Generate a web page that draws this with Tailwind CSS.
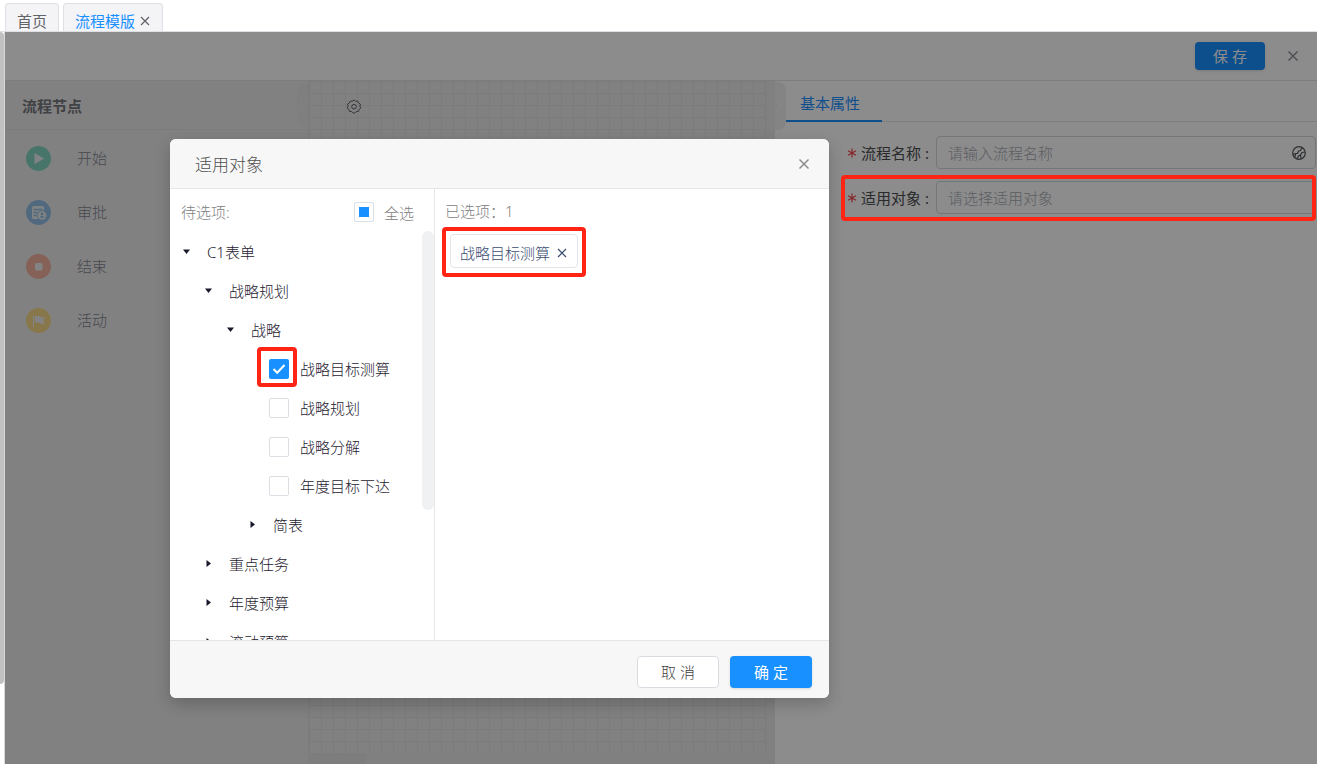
<!DOCTYPE html>
<html lang="zh-CN">
<head>
<meta charset="utf-8">
<meta name="viewport" content="width=device-width, initial-scale=1">
<title>流程模版</title>
<script src="https://cdn.jsdelivr.net/npm/@tailwindcss/browser@4"></script>
</head>
<body class="flex h-screen flex-col overflow-hidden bg-white font-['Noto_Sans','Noto_Sans_CJK_SC',sans-serif] text-[15px] leading-5 font-light text-[#1e2130]">

<!-- Page tabs -->
<nav class="flex h-8 shrink-0 items-end gap-1 border-b border-[#dfe0e6] pl-[5px] font-normal">
  <a href="#" class="flex h-7 items-center rounded-t border border-b-0 border-[#dfe0e6] bg-[#f4f4f7] px-[11px] pt-1.5 text-[#606266]">首页</a>
  <div class="flex h-7 items-center gap-1 rounded-t border border-b-0 border-[#dfe0e6] bg-[#f4f4f7] px-[11px] pt-1.5">
    <a href="#" class="text-[#1890ff]">流程模版</a>
    <button type="button" aria-label="关闭标签" class="w-3 text-[#606266]">
      <svg class="h-3 w-3" viewBox="0 0 12 12" fill="none" stroke="currentColor" stroke-width="1.2"><path d="M2 2l8 8M10 2l-8 8"/></svg>
    </button>
  </div>
</nav>

<div class="flex min-h-0 flex-1">
  <div class="w-[5px] shrink-0 border-r border-[#d8d8d8] bg-white pb-20">
    <div class="h-full rounded-r bg-[#c1c1c1]"></div>
  </div>

  <div class="relative flex min-w-0 flex-1 flex-col">
    <header class="flex h-[49px] shrink-0 items-center justify-end gap-5 border-b border-[#e4e4e4] pr-4">
      <button type="button" class="h-7 w-[70px] rounded bg-[#1890ff] font-normal text-white shadow">保 存</button>
      <button type="button" aria-label="关闭" class="text-[#909399]">
        <svg class="h-4 w-4" viewBox="0 0 16 16" fill="none" stroke="currentColor" stroke-width="1.5"><path d="M3.500 3.500l9 9M12.500 3.500l-9 9"/></svg>
      </button>
    </header>

    <div class="flex min-h-0 flex-1">
      <!-- Node palette -->
      <aside class="w-[304px] shrink-0 border-r border-[#e4e4e6] bg-[#edeced]">
        <div class="flex h-[49px] items-center justify-between border-b border-[#e2e2e4] pl-[17px]">
          <h2 class="pt-0.5 font-bold text-[#76787e]">流程节点</h2>
          <button type="button" aria-label="收起" class="flex h-11 w-[11px] items-center rounded-l-lg bg-[#e7e7e9] text-[#efeff1]">
            <svg class="h-4 w-2" viewBox="0 0 8 16" fill="none" stroke="currentColor"><path d="M6 2L2 8l4 6"/></svg>
          </button>
        </div>
        <ul class="px-[21px] pt-4 text-[#82858e]">
          <li class="flex h-[54px] items-start gap-[26px]">
            <svg class="h-[25px] w-[25px]" viewBox="0 0 25 25"><circle cx="12.500" cy="12.500" r="12.500" fill="#83d6c1"/><path d="M8.500 7v11.200l9.600-5.600z" fill="#e9eeee"/></svg>
            <span class="pt-0.5">开始</span>
          </li>
          <li class="flex h-[54px] items-start gap-[26px]">
            <svg class="h-[25px] w-[25px]" viewBox="0 0 25 25"><circle cx="12.500" cy="12.500" r="12.500" fill="#94c0e8"/><rect x="6" y="6" width="12" height="13" rx="1.500" fill="#e9eeee"/><path d="M7.500 9.500h9M7.500 12.500h4M7.500 15.500h3" stroke="#94c0e8" stroke-width="1.300"/><circle cx="16" cy="15.500" r="4.700" fill="#e9eeee" stroke="#94c0e8"/><circle cx="16" cy="14" r="1.300" fill="#94c0e8"/><path d="M13.700 17.700c.4-2.700 4.200-2.700 4.600 0z" fill="#94c0e8"/></svg>
            <span class="pt-0.5">审批</span>
          </li>
          <li class="flex h-[54px] items-start gap-[26px]">
            <svg class="h-[25px] w-[25px]" viewBox="0 0 25 25"><circle cx="12.500" cy="12.500" r="12.500" fill="#f2b19f"/><rect x="9" y="9" width="7.500" height="7.500" rx="1.500" fill="#eeeeee"/></svg>
            <span class="pt-0.5">结束</span>
          </li>
          <li class="flex h-[54px] items-start gap-[26px]">
            <svg class="h-[25px] w-[25px]" viewBox="0 0 25 25"><circle cx="12.500" cy="12.500" r="12.500" fill="#f6d987"/><path d="M7.500 7v12" stroke="#eee" stroke-width="1.200"/><path d="M9 8h5l1 1.300h4l-2 3.200 2 3.300h-5l-1-1.400H9z" fill="#eee"/></svg>
            <span class="pt-0.5">活动</span>
          </li>
        </ul>
      </aside>

      <!-- Canvas -->
      <main class="flex min-w-0 flex-1 flex-col bg-[#eaeaea]">
        <div class="mr-[9px] flex-1 bg-[linear-gradient(to_right,#e1e1e4_1px,transparent_1px),linear-gradient(to_bottom,#e1e1e4_1px,transparent_1px)] bg-[size:12px_12px] bg-[#ececec] pt-[18px] pl-[37px]">
          <button type="button" aria-label="设置" class="text-[#606266]">
            <svg class="h-4 w-4" viewBox="0 0 16 16" fill="none" stroke="currentColor"><path d="M8 1l1.700 1.200 2.100-.1.800 1.900 1.800 1.100-.5 2.100.8 1.900-1.600 1.300-.6 2-2.100.2L8.800 14H7.200l-1.600-1.400-2.100-.2-.6-2-1.600-1.300.8-1.900-.5-2.100L3.400 4l.8-1.900 2.100.1z" stroke-linejoin="round"/><circle cx="8" cy="7.700" r="2.300"/></svg>
          </button>
        </div>
        <div class="h-[11px]"><div class="h-full w-[57px] rounded-t bg-[#e4e4e6]"></div></div>
      </main>

      <!-- Properties -->
      <section class="flex w-[542px] shrink-0 bg-white">
        <button type="button" aria-label="收起" class="mt-px flex h-12 w-[11px] shrink-0 items-center rounded-r-lg bg-[#f1f1f2] text-[#fbfbfb]">
          <svg class="h-4 w-2" viewBox="0 0 8 16" fill="none" stroke="currentColor"><path d="M2 2l4 6-4 6"/></svg>
        </button>
        <div class="min-w-0 flex-1">
          <div class="flex h-[41px] border-b border-[#e4e4e6] font-normal">
            <button type="button" class="h-[41px] w-24 border-b-2 border-[#1890ff] pt-1 pr-2 text-[#1890ff]">基本属性</button>
          </div>
          <form class="flex flex-col gap-3 pt-[14px] pr-px pl-[61px] font-normal">
            <div class="flex h-[33px] items-center">
              <label for="name" class="flex w-[89px] shrink-0 items-center gap-1 text-[#4c4d50]">
                <svg class="h-2.5 w-2.5" viewBox="0 0 10 10" stroke="#f5454c" stroke-width="1.200"><path d="M5 .5v9M1 2.700l8 4.600M9 2.700L1 7.300"/></svg>
                <span>流程名称 :</span></label>
              <div class="flex h-full min-w-0 flex-1 items-center rounded border border-[#d6d8dc] pr-2">
                <input id="name" type="text" placeholder="请输入流程名称" class="h-full min-w-0 flex-1 pl-[11px] font-light outline-none placeholder:text-[#a8abb2]">
                <svg class="h-4 w-4 shrink-0 text-[#55575c]" viewBox="0 0 16 16" fill="none" stroke="currentColor" stroke-width="1.200"><circle cx="8" cy="8" r="6.300"/><path d="M2 9.500l2.500-1h2l1-2.500 2-.5L11 2.500M6 14l1.500-3 2-1M14 7l-3 .5-1.500 2.500.5 3.500M4.500 8.500L4 12"/></svg>
              </div>
            </div>
            <div class="relative flex h-[33px] items-center">
              <label for="target" class="flex w-[89px] shrink-0 items-center gap-1 text-[#4c4d50]">
                <svg class="h-2.5 w-2.5" viewBox="0 0 10 10" stroke="#f5454c" stroke-width="1.200"><path d="M5 .5v9M1 2.700l8 4.600M9 2.700L1 7.300"/></svg>
                <span>适用对象 :</span></label>
              <input id="target" type="text" placeholder="请选择适用对象" class="h-full min-w-0 flex-1 rounded border border-[#d6d8dc] pl-[11px] font-light outline-none placeholder:text-[#a8abb2]">
              <div class="absolute -top-[6px] right-0 -bottom-[7px] -left-[6px] z-30 rounded border-4 border-[#ff2414]"></div>
            </div>
          </form>
        </div>
      </section>
    </div>

    <!-- Modal -->
    <div class="absolute inset-0 z-20 overflow-hidden bg-black/45 pt-[107px] pl-[165px]">
      <div role="dialog" aria-labelledby="dialog-title" class="flex w-[659px] flex-col overflow-hidden rounded-md bg-white shadow-[0_6px_16px_rgba(0,0,0,0.2)]">
        <div class="flex h-[50px] items-center justify-between border-b border-[#e6e6e6] bg-[#f7f7f7] pr-[17px] pl-[25px]">
          <h1 id="dialog-title" class="pt-0.5 text-[17px] text-[#505050]">适用对象</h1>
          <button type="button" aria-label="关闭" class="text-[#8c8c8c]">
            <svg class="h-4 w-4" viewBox="0 0 16 16" fill="none" stroke="currentColor" stroke-width="1.500"><path d="M3.500 3.500l9 9M12.500 3.500l-9 9"/></svg>
          </button>
        </div>

        <div class="flex h-[451px]">
          <div class="flex w-[265px] shrink-0 flex-col border-r border-[#e6e6e6]">
            <div class="flex h-[42px] shrink-0 items-center justify-between pt-1 pr-5 pl-[11px] text-[#808080]">
              <span>待选项:</span>
              <label class="flex items-center gap-2.5">
                <span class="relative grid h-5 w-5 place-items-center">
                  <input type="checkbox" class="h-5 w-5 appearance-none rounded-xs border border-[#dcdee4]">
                  <span class="absolute h-2.5 w-2.5 bg-[#1890ff]"></span>
                </span>
                <span class="pt-0.5">全选</span>
              </label>
            </div>
            <div class="flex min-h-0 flex-1 overflow-hidden">
              <ul class="flex-1 pt-px pl-3">
                <li class="flex h-[39px] items-center gap-4"><svg class="h-[9px] w-[9px]" viewBox="0 0 9 9"><path d="M1 2.500h7L4.500 7z" fill="#17192a"/></svg>C1表单</li>
                <li class="flex h-[39px] items-center gap-4 pl-[22px]"><svg class="h-[9px] w-[9px]" viewBox="0 0 9 9"><path d="M1 2.500h7L4.500 7z" fill="#17192a"/></svg>战略规划</li>
                <li class="flex h-[39px] items-center gap-4 pl-11"><svg class="h-[9px] w-[9px]" viewBox="0 0 9 9"><path d="M1 2.500h7L4.500 7z" fill="#17192a"/></svg>战略</li>
                <li class="h-[39px] pl-[87px]">
                  <label class="flex h-full items-center gap-[11px]">
                    <span class="relative grid h-5 w-5 place-items-center">
                      <input type="checkbox" checked class="h-5 w-5 appearance-none rounded-xs bg-[#1890ff]">
                      <svg class="absolute h-3 w-3.5" viewBox="0 0 14 12" fill="none" stroke="#fff" stroke-width="2"><path d="M1.500 6l3.700 3.800L12.500 2"/></svg>
                      <span class="absolute -top-3 -right-2 -bottom-2 -left-3 rounded border-4 border-[#ff2414]"></span>
                    </span>战略目标测算
                  </label>
                </li>
                <li class="h-[39px] pl-[87px]"><label class="flex h-full items-center gap-[11px]"><input type="checkbox" class="h-5 w-5 appearance-none rounded-xs border border-[#dcdee4]">战略规划</label></li>
                <li class="h-[39px] pl-[87px]"><label class="flex h-full items-center gap-[11px]"><input type="checkbox" class="h-5 w-5 appearance-none rounded-xs border border-[#dcdee4]">战略分解</label></li>
                <li class="h-[39px] pl-[87px]"><label class="flex h-full items-center gap-[11px]"><input type="checkbox" class="h-5 w-5 appearance-none rounded-xs border border-[#dcdee4]">年度目标下达</label></li>
                <li class="flex h-[39px] items-center gap-4 pl-[66px]"><svg class="h-[9px] w-[9px]" viewBox="0 0 9 9"><path d="M2.500 1v7L7 4.500z" fill="#17192a"/></svg>简表</li>
                <li class="flex h-[39px] items-center gap-4 pl-[22px]"><svg class="h-[9px] w-[9px]" viewBox="0 0 9 9"><path d="M2.500 1v7L7 4.500z" fill="#17192a"/></svg>重点任务</li>
                <li class="flex h-[39px] items-center gap-4 pl-[22px]"><svg class="h-[9px] w-[9px]" viewBox="0 0 9 9"><path d="M2.500 1v7L7 4.500z" fill="#17192a"/></svg>年度预算</li>
                <li class="flex h-[39px] items-center gap-4 pl-[22px]"><svg class="h-[9px] w-[9px]" viewBox="0 0 9 9"><path d="M2.500 1v7L7 4.500z" fill="#17192a"/></svg>滚动预算</li>
              </ul>
              <div class="h-[279px] w-3 shrink-0 rounded-full bg-[#f0f1f3]"></div>
            </div>
          </div>

          <div class="min-w-0 flex-1 pt-3 pl-2.5">
            <p class="text-[#808080]">已选项：1</p>
            <div class="relative mt-[13px] ml-[5px] flex h-[34px] w-32 items-center justify-between rounded border border-[#e4e5e8] px-[9px] pt-1 text-[#3a4c72]">
              <span>战略目标测算</span>
              <button type="button" aria-label="移除" class="w-3">
                <svg class="h-3 w-3" viewBox="0 0 12 12" fill="none" stroke="currentColor" stroke-width="1.200"><path d="M2 2l8 8M10 2l-8 8"/></svg>
              </button>
              <span class="absolute -top-2 -right-[9px] -bottom-[10px] -left-[9px] rounded border-4 border-[#ff2414]"></span>
            </div>
          </div>
        </div>

        <div class="flex h-[58px] items-center justify-end gap-[11px] border-t border-[#e6e6e6] bg-[#f7f7f7] pt-1 pr-[17px]">
          <button type="button" class="h-8 w-[82px] rounded border border-[#d9dbe0] bg-white text-[#404040]">取 消</button>
          <button type="button" class="h-8 w-[82px] rounded bg-[#1890ff] font-normal text-white shadow-sm">确 定</button>
        </div>
      </div>
    </div>
  </div>
</div>
</body>
</html>
